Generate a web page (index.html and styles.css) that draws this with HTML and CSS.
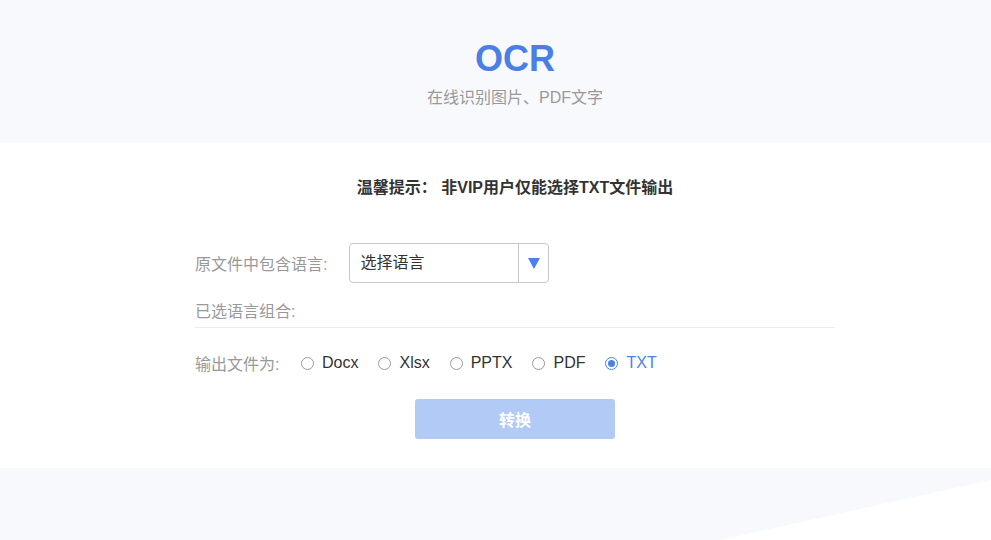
FILE: index.html
```html
<!DOCTYPE html>
<html lang="zh-CN">
<head>
<meta charset="utf-8">
<title>OCR</title>
<link rel="stylesheet" href="styles.css">
</head>
<body>
<header class="hero">
  <h1 class="title">OCR</h1>
  <p class="subtitle">在线识别图片、PDF文字</p>
</header>
<main class="panel">
  <p class="notice">温馨提示：&nbsp;非VIP用户仅能选择TXT文件输出</p>
  <div class="form">
    <div class="row">
      <span class="label">原文件中包含语言:</span>
      <div class="select">
        <span class="select-text">选择语言</span>
        <span class="select-arrow"><i class="tri"></i></span>
      </div>
    </div>
    <div class="combo">已选语言组合:</div>
    <div class="row radios">
      <span class="label">输出文件为:</span>
      <label class="radio"><i class="dot"></i>Docx</label>
      <label class="radio"><i class="dot"></i>Xlsx</label>
      <label class="radio"><i class="dot"></i>PPTX</label>
      <label class="radio"><i class="dot"></i>PDF</label>
      <label class="radio checked"><i class="dot"></i>TXT</label>
    </div>
    <div class="actions">
      <button class="btn" type="button">转换</button>
    </div>
  </div>
</main>
<footer class="bottom">
  <svg class="wedge" viewBox="0 0 991 72" preserveAspectRatio="none" aria-hidden="true">
    <polygon points="720,72 991,12 991,72" fill="#ffffff"/>
  </svg>
</footer>
</body>
</html>
```
FILE: styles.css
```css
* { box-sizing: border-box; }
html, body { margin: 0; padding: 0; }
body {
  background: #f8f9fd;
  font-family: "Liberation Sans", Arial, "Noto Sans CJK SC", sans-serif;
  color: #333;
  width: 991px;
  height: 540px;
  overflow: hidden;
}
.hero {
  height: 143px;
  padding: 38px 0 0 39px;
  text-align: center;
  background: #f8f9fd;
}
.title {
  margin: 0;
  font-size: 36px;
  font-weight: bold;
  line-height: 41px;
  color: #4b7fe5;
}
.subtitle {
  margin: 7px 0 0;
  font-size: 16px;
  line-height: 24px;
  color: #999;
}
.panel {
  background: #fff;
  height: 325px;
  padding: 33px 0 0 39px;
}
.notice {
  margin: 0;
  text-align: center;
  font-size: 16px;
  font-weight: bold;
  line-height: 24px;
  color: #333;
}
.form {
  width: 640px;
  margin: 43px auto 0;
}
.row {
  display: flex;
  align-items: center;
}
.label {
  font-size: 16px;
  color: #999;
  margin-right: 22px;
  white-space: nowrap;
}
.select {
  width: 200px;
  height: 40px;
  border: 1px solid #c8c8c8;
  border-radius: 4px;
  display: flex;
  align-items: stretch;
  background: #fff;
}
.select-text {
  flex: 1;
  padding-left: 10px;
  font-size: 16px;
  line-height: 38px;
  color: #333;
}
.select-arrow {
  width: 30px;
  border-left: 1px solid #c8c8c8;
  display: flex;
  align-items: center;
  justify-content: center;
}
.tri {
  width: 0;
  height: 0;
  border-left: 6px solid transparent;
  border-right: 6px solid transparent;
  border-top: 11px solid #4a82e8;
}
.combo {
  margin-top: 14px;
  font-size: 16px;
  line-height: 30px;
  color: #999;
  border-bottom: 1px solid #ececec;
}
.radios {
  margin-top: 20px;
  height: 30px;
}
.radios .label { margin-right: 0; width: 106px; }
.radio {
  display: flex;
  align-items: center;
  font-size: 16px;
  color: #333;
  margin-right: 20px;
}
.dot {
  width: 13px;
  height: 13px;
  border: 1px solid #9a9a9a;
  border-radius: 50%;
  margin-right: 8px;
  display: flex;
  align-items: center;
  justify-content: center;
}
.radio.checked { color: #4a82e8; }
.radio.checked .dot { border-color: #4a82e8; }
.radio.checked .dot::after {
  content: "";
  width: 7px;
  height: 7px;
  border-radius: 50%;
  background: #4a82e8;
}
.actions {
  margin-top: 21px;
  padding-left: 220px;
}
.btn {
  width: 200px;
  height: 40px;
  border: 0;
  border-radius: 3px;
  background: #b1cbf6;
  color: #fff;
  font-family: "Liberation Sans", Arial, "Noto Sans CJK SC", sans-serif;
  font-size: 16px;
  font-weight: bold;
  cursor: pointer;
}
.bottom {
  height: 72px;
  background: #f8f9fd;
}
.wedge {
  display: block;
  width: 100%;
  height: 72px;
}
```
